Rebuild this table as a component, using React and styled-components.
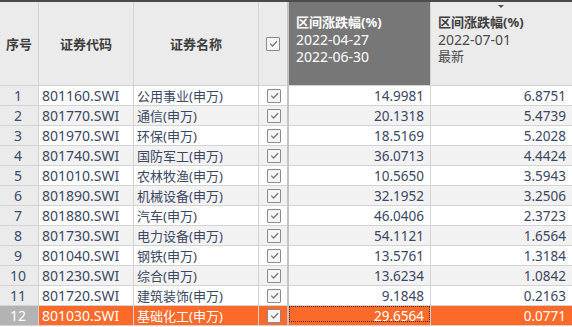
import React from "react";
import styled, { createGlobalStyle, css } from "styled-components";

const GlobalStyle = createGlobalStyle`
  html, body { margin: 0; padding: 0; background: #ffffff; }
  body { font-family: "Noto Sans", "Noto Sans CJK SC", sans-serif; }
`;

const rows = [
  ["801160.SWI", "公用事业(申万)", "14.9981", "6.8751"],
  ["801770.SWI", "通信(申万)", "20.1318", "5.4739"],
  ["801970.SWI", "环保(申万)", "18.5169", "5.2028"],
  ["801740.SWI", "国防军工(申万)", "36.0713", "4.4424"],
  ["801010.SWI", "农林牧渔(申万)", "10.5650", "3.5943"],
  ["801890.SWI", "机械设备(申万)", "32.1952", "3.2506"],
  ["801880.SWI", "汽车(申万)", "46.0406", "2.3723"],
  ["801730.SWI", "电力设备(申万)", "54.1121", "1.6564"],
  ["801040.SWI", "钢铁(申万)", "13.5761", "1.3184"],
  ["801230.SWI", "综合(申万)", "13.6234", "1.0842"],
  ["801720.SWI", "建筑装饰(申万)", "9.1848", "0.2163"],
  ["801030.SWI", "基础化工(申万)", "29.6564", "0.0771"],
];

const SELECTED = 11;
const ORANGE = "#fc6a29";

const Table = styled.div`
  width: 572px;
  border-top: 2px solid #4b4b4b;
  display: grid;
  grid-template-columns: 39px 95px 125px 30px 142px 141px;
  grid-template-rows: 84px;
  grid-auto-rows: 20px;
  font-size: 13px;
  color: #3a4762;
`;

const cellBase = css`
  box-sizing: border-box;
  border-right: 1px solid #d3d3d3;
  border-bottom: 1px solid #d3d3d3;
  display: flex;
  align-items: center;
  white-space: nowrap;
  overflow: hidden;
  position: relative;
`;

const HeadCell = styled.div`
  ${cellBase};
  background: #ebebeb;
  justify-content: center;
  font-weight: 700;
  color: #3d3d3d;
  font-size: 13px;
  ${(p) => p.$split && css`border-right: 2px solid #c2c2c2;`}
`;

const HeadStack = styled.div`
  ${cellBase};
  flex-direction: column;
  align-items: flex-start;
  justify-content: flex-start;
  padding: 12px 0 0 7px;
  background: ${(p) => (p.$dark ? "#777777" : "#ebebeb")};
  color: ${(p) => (p.$dark ? "#ffffff" : "#4a4a4a")};
  ${(p) => p.$last && css`border-right: none;`}
`;

const HeadTitle = styled.div`
  font-weight: 700;
  font-size: 13px;
  line-height: 17px;
  color: ${(p) => (p.$dark ? "#ffffff" : "#3d3d3d")};
`;

const HeadLine = styled.div`
  font-size: 14px;
  line-height: 17px;
`;

const HeadNote = styled.div`
  font-size: 13px;
  line-height: 17px;
`;

const SortMark = styled.span`
  position: absolute;
  top: 3px;
  left: 67px;
  width: 0;
  height: 0;
  border-left: 3px solid transparent;
  border-right: 3px solid transparent;
  border-top: 3px solid #555555;
`;

const SeqCell = styled.div`
  ${cellBase};
  justify-content: center;
  padding-right: 2px;
  background: ${(p) => (p.$sel ? "#b3b3b3" : "#ebebeb")};
  color: ${(p) => (p.$sel ? "#ffffff" : "#3a4a6a")};
  font-size: 14px;
`;

const BodyCell = styled.div`
  ${cellBase};
  background: ${(p) => (p.$sel ? ORANGE : p.$alt ? "#f2f2f2" : "#ffffff")};
  color: ${(p) => (p.$sel ? "#ffffff" : "#3a4762")};
  justify-content: ${(p) => (p.$align === "right" ? "flex-end" : p.$align === "center" ? "center" : "flex-start")};
  padding: ${(p) => (p.$align === "right" ? "0 6px 0 0" : p.$align === "center" ? "0 0 0 2px" : "0 0 0 3px")};
  font-size: ${(p) => (p.$cjk ? "13px" : p.$align === "right" ? "13.5px" : "14px")};
  ${(p) => p.$split && css`border-right: 2px solid #c2c2c2;`}
  ${(p) => p.$last && css`border-right: none;`}
`;

const FocusBox = styled.div`
  position: absolute;
  inset: 0 0 3px 0;
  border: 1px dotted #5b2208;
  pointer-events: none;
`;

const CheckBox = styled.span`
  box-sizing: border-box;
  width: 14px;
  height: 14px;
  border: 1.5px solid #8a8a8a;
  border-radius: 1px;
  background: #f6f6f6;
  display: inline-flex;
  align-items: center;
  justify-content: center;
`;

const Check = () => (
  <CheckBox>
    <svg width="11" height="11" viewBox="0 0 11 11">
      <polyline points="2.2,5.6 4.6,8 9,3.2" fill="none" stroke="#777777" strokeWidth="1.3" />
    </svg>
  </CheckBox>
);

export default function App() {
  return (
    <>
      <GlobalStyle />
      <Table>
        <HeadCell>序号</HeadCell>
        <HeadCell>证券代码</HeadCell>
        <HeadCell>证券名称</HeadCell>
        <HeadCell $split>
          <Check />
        </HeadCell>
        <HeadStack $dark>
          <HeadTitle $dark>区间涨跌幅(%)</HeadTitle>
          <HeadLine>2022-04-27</HeadLine>
          <HeadLine>2022-06-30</HeadLine>
        </HeadStack>
        <HeadStack $last>
          <SortMark />
          <HeadTitle>区间涨跌幅(%)</HeadTitle>
          <HeadLine>2022-07-01</HeadLine>
          <HeadNote>最新</HeadNote>
        </HeadStack>
        {rows.map(([code, name, a, b], i) => {
          const sel = i === SELECTED;
          const alt = i % 2 === 1;
          return (
            <React.Fragment key={code}>
              <SeqCell $sel={sel}>{i + 1}</SeqCell>
              <BodyCell $sel={sel} $alt={alt}>{code}</BodyCell>
              <BodyCell $sel={sel} $alt={alt} $cjk>{name}</BodyCell>
              <BodyCell $sel={sel} $alt={alt} $align="center" $split>
                <Check />
              </BodyCell>
              <BodyCell $sel={sel} $alt={alt} $align="right">
                {a}
                {sel && <FocusBox />}
              </BodyCell>
              <BodyCell $sel={sel} $alt={alt} $align="right" $last>
                {b}
              </BodyCell>
            </React.Fragment>
          );
        })}
      </Table>
    </>
  );
}
